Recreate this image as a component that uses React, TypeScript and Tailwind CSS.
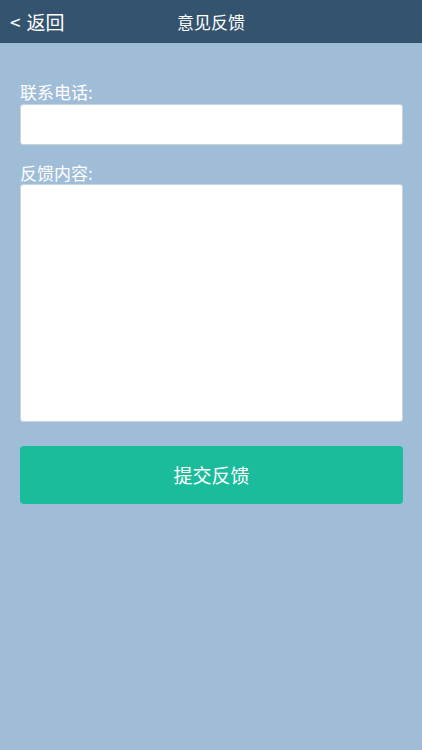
import React from 'react';

const font = { fontFamily: '"Noto Sans CJK SC", "Noto Sans", sans-serif' };

export default function App() {
  return (
    <div className="min-h-[750px] w-full bg-[#a0bdd8] flex flex-col" style={font}>
      <header className="relative h-[43px] bg-[#34536e] flex items-center text-white">
        <button className="pl-[10px] text-[19px] leading-none flex items-center gap-[6px]">
          <span>&lt;</span>
          <span>返回</span>
        </button>
        <h1 className="absolute inset-x-0 text-center text-[17px] leading-none pointer-events-none">意见反馈</h1>
      </header>

      <main className="pl-[20px] pr-[19px] pt-[38px] flex flex-col">
        <label className="text-white text-[17px] leading-[22px] mb-[1px]">联系电话:</label>
        <input
          type="text"
          className="h-[41px] bg-white rounded-[3px] border border-[#c9d3dc] px-2 outline-none"
        />

        <label className="text-white text-[17px] leading-[22px] mt-[17px]">反馈内容:</label>
        <textarea className="h-[238px] bg-white rounded-[3px] border border-[#c9d3dc] p-2 outline-none resize-none" />

        <button className="mt-[24px] h-[58px] rounded-[4px] bg-[#1abc9c] text-white text-[19px]">
          提交反馈
        </button>
      </main>
    </div>
  );
}
